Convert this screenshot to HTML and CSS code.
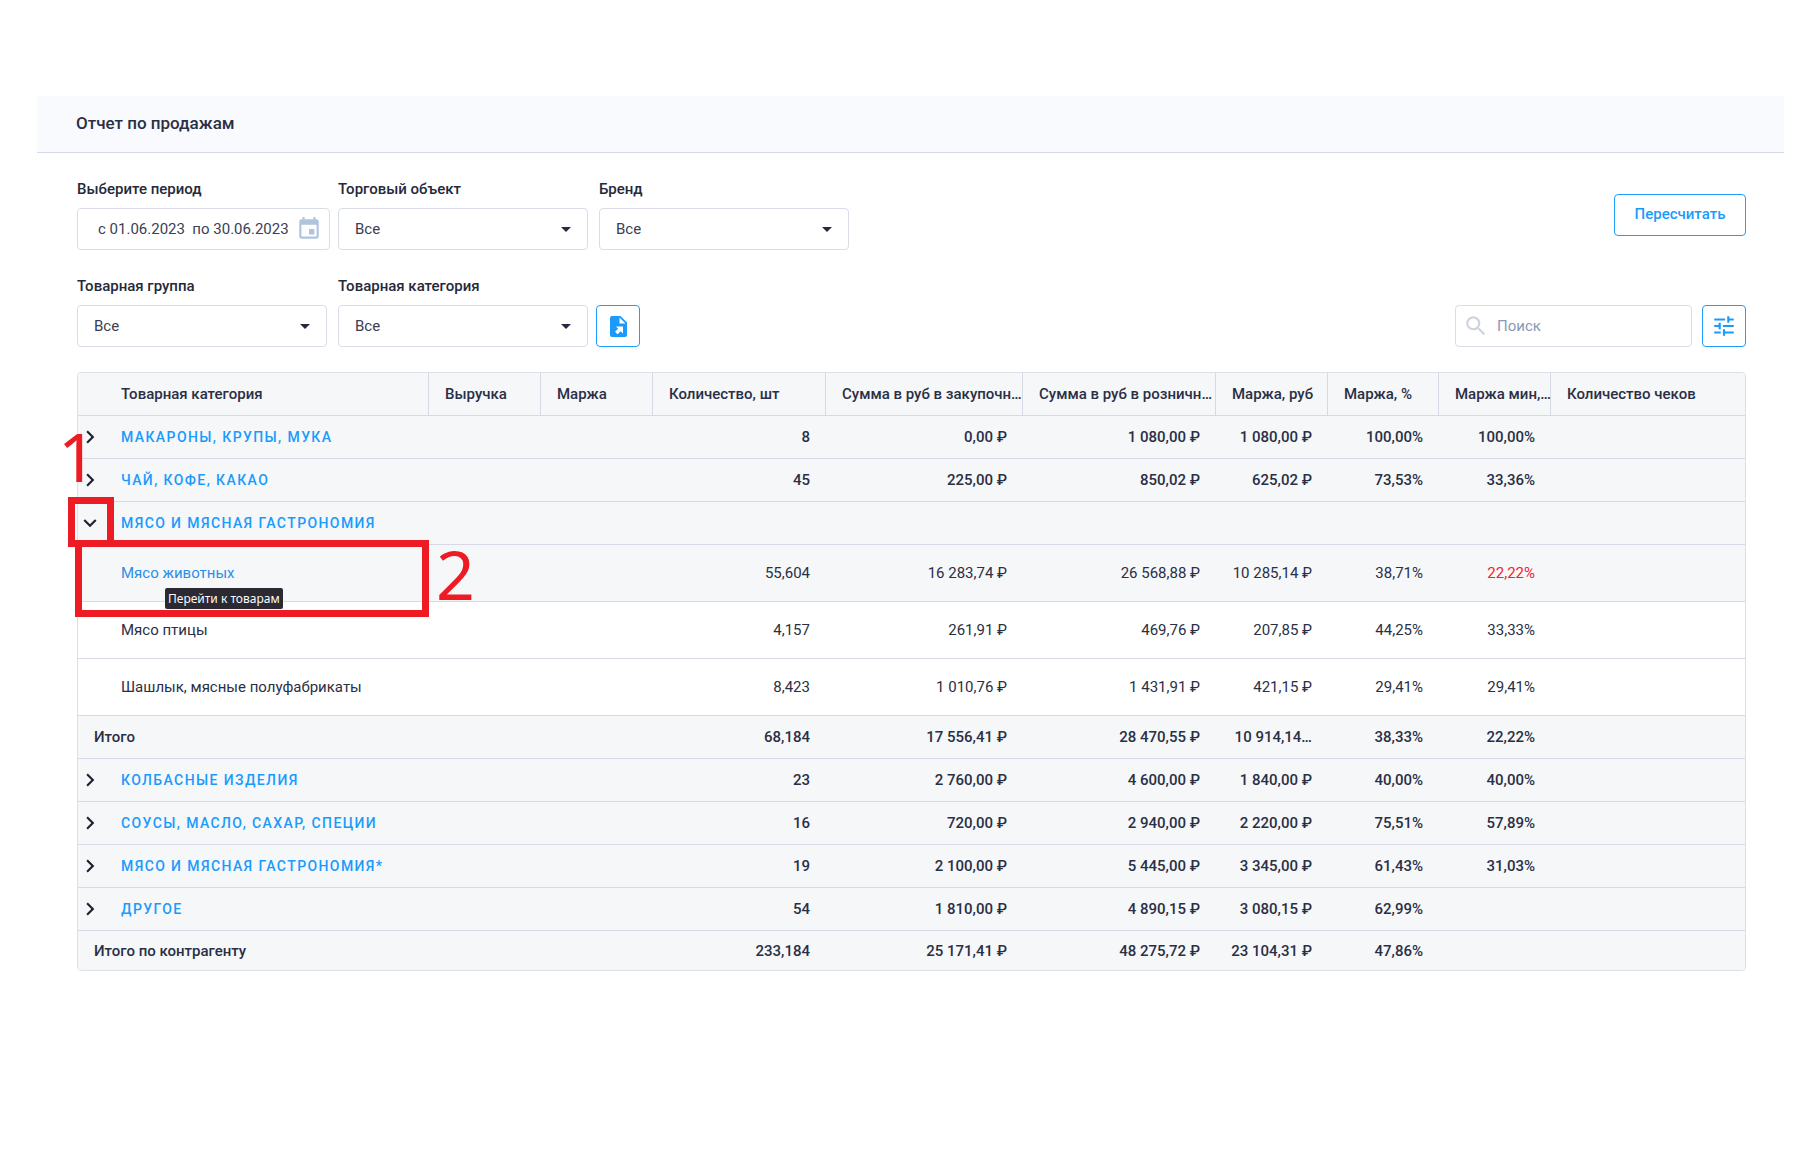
FILE: index.html
```html
<!DOCTYPE html>
<html lang="ru">
<head>
<meta charset="utf-8">
<title>Отчет по продажам</title>
<meta name="viewport" content="width=device-width, initial-scale=1">
<link rel="stylesheet" href="styles.css">
</head>
<body>
<svg class="sprite" aria-hidden="true">
  <symbol id="caret" viewBox="0 0 10 5"><path d="M0 0h10L5 5z"/></symbol>
  <symbol id="chevron-right" viewBox="0 0 24 24"><path d="M8.6 16.6 13.2 12 8.6 7.4 10 6l6 6-6 6z"/></symbol>
  <symbol id="chevron-down" viewBox="0 0 24 24"><path d="M7.4 8.6 12 13.2l4.6-4.6L18 10l-6 6-6-6z"/></symbol>
</svg>
<div class="page">
  <header class="header">
    <h1 class="title">Отчет по продажам</h1>
  </header>
  <main class="content">
    <div class="toolbar">
      <div class="filters">
        <div class="field">
          <label class="label" for="period">Выберите период</label>
          <div class="control control--period">
            <input class="input input--period" id="period" type="text" value="с 01.06.2023&nbsp; по 30.06.2023">
            <svg class="icon-calendar" viewBox="0 0 24 24" aria-hidden="true"><path d="M17 12h-5v5h5v-5zM16 1v2H8V1H6v2H5c-1.11 0-1.99.9-1.99 2L3 19c0 1.1.89 2 2 2h14c1.1 0 2-.9 2-2V5c0-1.1-.9-2-2-2h-1V1h-2zm3 18H5V8h14v11z"/></svg>
          </div>
        </div>
        <div class="field">
          <label class="label" for="store">Торговый объект</label>
          <div class="control">
            <select class="input" id="store"><option>Все</option></select>
            <svg class="caret" aria-hidden="true"><use href="#caret"/></svg>
          </div>
        </div>
        <div class="field">
          <label class="label" for="brand">Бренд</label>
          <div class="control">
            <select class="input" id="brand"><option>Все</option></select>
            <svg class="caret" aria-hidden="true"><use href="#caret"/></svg>
          </div>
        </div>
      </div>
      <button class="button" type="button">Пересчитать</button>
    </div>
    <div class="toolbar toolbar--end">
      <div class="filters">
        <div class="field">
          <label class="label" for="group">Товарная группа</label>
          <div class="control">
            <select class="input" id="group"><option>Все</option></select>
            <svg class="caret" aria-hidden="true"><use href="#caret"/></svg>
          </div>
        </div>
        <div class="field-group">
          <div class="field">
            <label class="label" for="category">Товарная категория</label>
            <div class="control">
              <select class="input" id="category"><option>Все</option></select>
              <svg class="caret" aria-hidden="true"><use href="#caret"/></svg>
            </div>
          </div>
          <button class="button button--icon" type="button" aria-label="Экспорт">
            <svg class="icon-file" viewBox="0 0 17 21" aria-hidden="true"><path fill-rule="evenodd" d="M2 0h8.500L17 6.500V19a2 2 0 0 1-2 2H2a2 2 0 0 1-2-2V2a2 2 0 0 1 2-2zM9.500 1.500V7.500H15.500zM6 10.500h7v7l-2.300-2.300L7.600 18.300 5 15.800l3.200-3.100z"/></svg>
          </button>
        </div>
      </div>
      <div class="search-group">
        <div class="control control--search">
          <svg class="icon-search" viewBox="0 0 24 24" aria-hidden="true"><path d="M15.500 14h-.79l-.28-.27A6.470 6.470 0 0 0 16 9.500 6.500 6.500 0 1 0 9.500 16c1.610 0 3.090-.59 4.230-1.570l.27.28v.79l5 4.990L20.490 19l-4.990-5zm-6 0C7.010 14 5 11.990 5 9.500S7.010 5 9.500 5 14 7.010 14 9.500 11.990 14 9.500 14z"/></svg>
          <input class="input input--search" type="search" placeholder="Поиск" aria-label="Поиск">
        </div>
        <button class="button button--icon" type="button" aria-label="Настройки">
          <svg class="icon-tune" viewBox="0 0 24 24" aria-hidden="true"><path d="M3 17v2h6v-2H3zM3 5v2h10V5H3zm10 16v-2h8v-2h-8v-2h-2v6h2zM7 9v2H3v2h4v2h2V9H7zm14 4v-2H11v2h10zm-6-4h2V7h4V5h-4V3h-2v6z"/></svg>
        </button>
      </div>
    </div>

    <div class="report">
      <div class="table-frame">
        <table class="table">
          <colgroup>
            <col class="col-name"><col class="col-m"><col class="col-m"><col class="col-qty"><col class="col-cost"><col class="col-retail"><col class="col-m"><col class="col-s"><col class="col-m"><col>
          </colgroup>
          <thead>
            <tr><th>Товарная категория</th><th>Выручка</th><th>Маржа</th><th>Количество, шт</th><th>Сумма в руб в закупочн…</th><th>Сумма в руб в розничн…</th><th>Маржа, руб</th><th>Маржа, %</th><th>Маржа мин,…</th><th>Количество чеков</th></tr>
          </thead>
          <tbody>
            <tr class="group"><td><div class="name"><button class="toggle" type="button" aria-label="Развернуть"><svg class="chevron"><use href="#chevron-right"/></svg></button><a class="category" href="#">Макароны, крупы, мука</a></div></td><td></td><td></td><td>8</td><td>0,00 ₽</td><td>1 080,00 ₽</td><td>1 080,00 ₽</td><td>100,00%</td><td>100,00%</td><td></td></tr>
            <tr class="group"><td><div class="name"><button class="toggle" type="button" aria-label="Развернуть"><svg class="chevron"><use href="#chevron-right"/></svg></button><a class="category" href="#">Чай, кофе, какао</a></div></td><td></td><td></td><td>45</td><td>225,00 ₽</td><td>850,02 ₽</td><td>625,02 ₽</td><td>73,53%</td><td>33,36%</td><td></td></tr>
            <tr class="group"><td><div class="name"><button class="toggle" type="button" aria-label="Свернуть"><svg class="chevron"><use href="#chevron-down"/></svg></button><a class="category" href="#">Мясо и мясная гастрономия</a></div></td><td></td><td></td><td></td><td></td><td></td><td></td><td></td><td></td><td></td></tr>
            <tr class="item item--hover"><td><a class="item-link" href="#">Мясо животных</a></td><td></td><td></td><td>55,604</td><td>16 283,74 ₽</td><td>26 568,88 ₽</td><td>10 285,14 ₽</td><td>38,71%</td><td class="low">22,22%</td><td></td></tr>
            <tr class="item"><td>Мясо птицы</td><td></td><td></td><td>4,157</td><td>261,91 ₽</td><td>469,76 ₽</td><td>207,85 ₽</td><td>44,25%</td><td>33,33%</td><td></td></tr>
            <tr class="item"><td>Шашлык, мясные полуфабрикаты</td><td></td><td></td><td>8,423</td><td>1 010,76 ₽</td><td>1 431,91 ₽</td><td>421,15 ₽</td><td>29,41%</td><td>29,41%</td><td></td></tr>
            <tr class="group total"><td>Итого</td><td></td><td></td><td>68,184</td><td>17 556,41 ₽</td><td>28 470,55 ₽</td><td>10 914,14…</td><td>38,33%</td><td>22,22%</td><td></td></tr>
            <tr class="group"><td><div class="name"><button class="toggle" type="button" aria-label="Развернуть"><svg class="chevron"><use href="#chevron-right"/></svg></button><a class="category" href="#">Колбасные изделия</a></div></td><td></td><td></td><td>23</td><td>2 760,00 ₽</td><td>4 600,00 ₽</td><td>1 840,00 ₽</td><td>40,00%</td><td>40,00%</td><td></td></tr>
            <tr class="group"><td><div class="name"><button class="toggle" type="button" aria-label="Развернуть"><svg class="chevron"><use href="#chevron-right"/></svg></button><a class="category" href="#">Соусы, масло, сахар, специи</a></div></td><td></td><td></td><td>16</td><td>720,00 ₽</td><td>2 940,00 ₽</td><td>2 220,00 ₽</td><td>75,51%</td><td>57,89%</td><td></td></tr>
            <tr class="group"><td><div class="name"><button class="toggle" type="button" aria-label="Развернуть"><svg class="chevron"><use href="#chevron-right"/></svg></button><a class="category" href="#">Мясо и мясная гастрономия*</a></div></td><td></td><td></td><td>19</td><td>2 100,00 ₽</td><td>5 445,00 ₽</td><td>3 345,00 ₽</td><td>61,43%</td><td>31,03%</td><td></td></tr>
            <tr class="group"><td><div class="name"><button class="toggle" type="button" aria-label="Развернуть"><svg class="chevron"><use href="#chevron-right"/></svg></button><a class="category" href="#">Другое</a></div></td><td></td><td></td><td>54</td><td>1 810,00 ₽</td><td>4 890,15 ₽</td><td>3 080,15 ₽</td><td>62,99%</td><td></td><td></td></tr>
          </tbody>
          <tfoot>
            <tr class="group total grand"><td>Итого по контрагенту</td><td></td><td></td><td>233,184</td><td>25 171,41 ₽</td><td>48 275,72 ₽</td><td>23 104,31 ₽</td><td>47,86%</td><td></td><td></td></tr>
          </tfoot>
        </table>
      </div>
      <div class="tooltip" role="tooltip">Перейти к товарам</div>
      <div class="mark mark--toggle"></div>
      <div class="mark mark--item"></div>
      <span class="step step--one">1</span>
      <span class="step step--two">2</span>
    </div>
  </main>
</div>
</body>
</html>
```
FILE: styles.css
```css
* { box-sizing: border-box; }

body {
  margin: 0;
  background: #fff;
  color: #2a2f45;
  font: 400 15px/20px Roboto, "Noto Sans", sans-serif;
}

a { color: #1a9bfc; text-decoration: none; }
button, input, select { font: inherit; color: inherit; }
.sprite { display: none; }

.page { padding: 96px 36px 0 37px; }

.header {
  padding: 17px 39px 19px;
  background: #f9fafe;
  border-bottom: 1px solid #d5dae8;
}
.title { margin: 0; font-size: 17px; line-height: 20px; font-weight: 500; }

.content {
  display: flex;
  flex-direction: column;
  gap: 25px;
  padding: 25px 38px 40px 40px;
}

/* Filters */
.toolbar { display: flex; justify-content: space-between; align-items: flex-start; }
.toolbar > .button { margin-top: 16px; }
.toolbar--end { align-items: flex-end; }
.filters { display: flex; gap: 11px; }
.field { display: flex; flex-direction: column; gap: 9px; width: 250px; }
.field-group { display: flex; align-items: flex-end; gap: 8px; }
.search-group { display: flex; gap: 10px; }
.label { padding-top: 1px; font-weight: 500; color: #25293a; }

.control { position: relative; height: 42px; }
.control--period { width: 253px; }
.control--search { width: 237px; }
.input {
  display: block;
  width: 100%;
  height: 100%;
  padding: 0 16px;
  border: 1px solid #d8dde8;
  border-radius: 4px;
  background: #fff;
  color: #3b4054;
  appearance: none;
  outline: none;
}
.input--period { padding: 0 20px; }
.input--search { padding-left: 41px; }
.input::placeholder { color: #8b98b5; opacity: 1; }
.caret { position: absolute; right: 17px; top: 19px; width: 10px; height: 5px; fill: #252a41; pointer-events: none; }
.icon-calendar { position: absolute; right: 8px; top: 8px; width: 26px; height: 26px; fill: #b0c4de; }
.icon-search { position: absolute; left: 8px; top: 8px; width: 26px; height: 26px; fill: #cdd4e0; }

.button {
  display: flex;
  align-items: center;
  justify-content: center;
  width: 132px;
  height: 42px;
  padding: 0 0 2px;
  border: 1px solid #1f9ffc;
  border-radius: 4px;
  background: #fff;
  color: #1a9bfc;
  font-weight: 500;
}
.button--icon { width: 44px; padding: 0; }
.icon-file { width: 17px; height: 21px; fill: #1a9bfc; }
.icon-tune { width: 26px; height: 26px; fill: #1a9bfc; }

/* Report table */
.report { position: relative; }
.table-frame { border: 1px solid #dadfe9; border-radius: 4px; overflow: hidden; }
.table { width: 100%; table-layout: fixed; border-collapse: separate; border-spacing: 0; }
.col-name { width: 351px; }
.col-s { width: 111px; }
.col-m { width: 112px; }
.col-qty { width: 173px; }
.col-cost { width: 197px; }
.col-retail { width: 193px; }

.table th, .table td {
  height: 43px;
  padding: 0 16px 0 12px;
  border-bottom: 1px solid #d5dae6;
  text-align: right;
  white-space: nowrap;
}
.table th {
  padding: 0 0 0 16px;
  border-right: 1px solid #d5dae6;
  background: #f5f7f9;
  text-align: left;
  font-weight: 500;
}
.table th:last-child { border-right: 0; }
.table th:first-child, .table td:first-child { padding-left: 43px; text-align: left; }
.table .group td { background: #f5f7f9; font-weight: 500; }
.table .group td:first-child { padding-left: 0; }
.table .total td:first-child { padding-left: 16px; }
.table .item td { height: 57px; }
.table .item--hover td { background: #f5f7f9; }
.table .low { color: #f5222d; }
.table .grand td { height: 39px; border-bottom: 0; }

.name { display: flex; align-items: center; gap: 18px; }
.toggle { display: flex; justify-content: flex-end; width: 25px; padding: 0; border: 0; background: none; }
.chevron { flex: none; width: 26px; height: 26px; fill: #1f2230; }
.category { font-size: 14px; letter-spacing: 0.1em; text-transform: uppercase; }
.item-link { color: #2a8fe8; }

.tooltip {
  position: absolute;
  left: 88px;
  top: 216px;
  padding: 1px 3px 0;
  border-radius: 2px;
  background: #2b2a33;
  color: #fbfbfe;
  font: 12px/20px "Noto Sans", sans-serif;
}

/* Step annotations over the table */
.mark { position: absolute; border: 7px solid #ed1c24; }
.mark--toggle { left: -9px; top: 125px; width: 46px; height: 50px; }
.mark--item { left: -2px; top: 168px; width: 354px; height: 77px; }
.step { position: absolute; color: #ed1c24; font: 68px/68px "Noto Sans", sans-serif; }
.step--one { left: -19px; top: 50px; }
.step--two { left: 359px; top: 168px; }
```
